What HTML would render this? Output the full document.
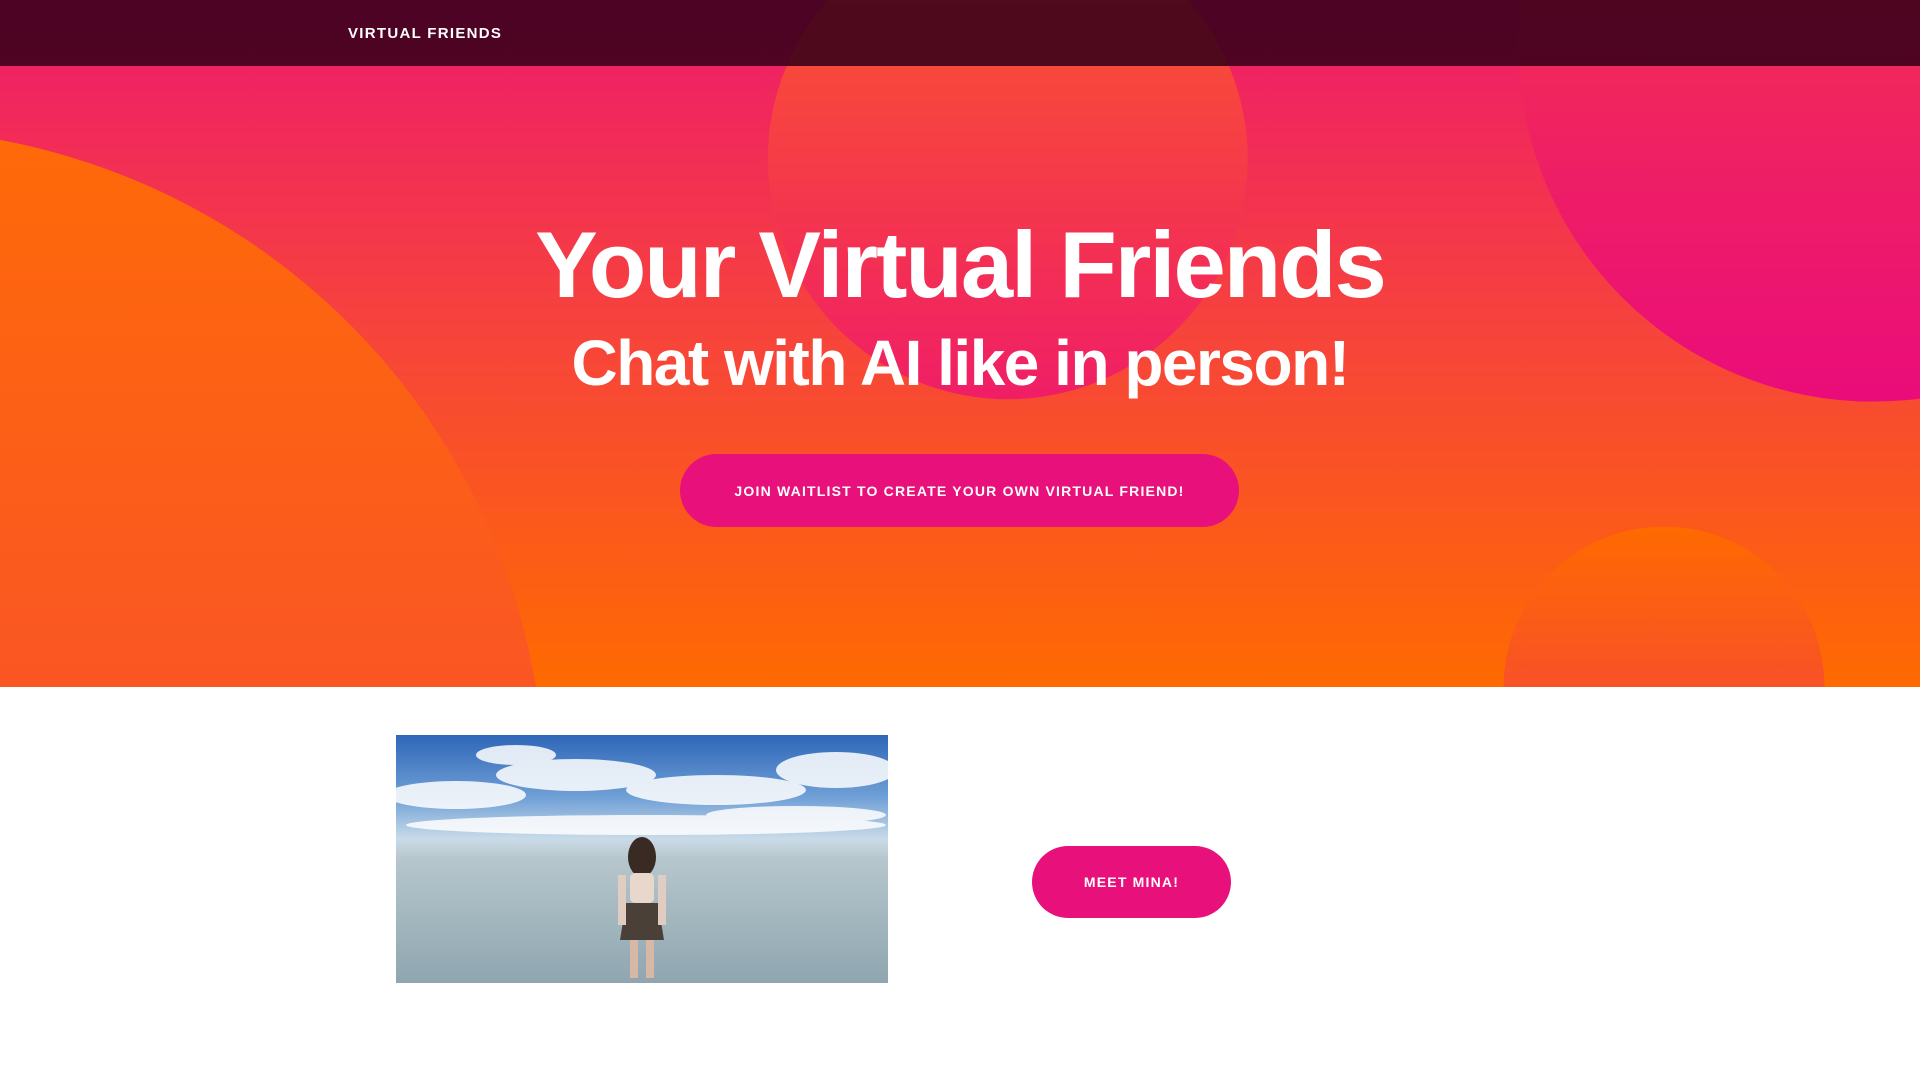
<!DOCTYPE html>
<html><head><meta charset="utf-8"><style>
html,body{margin:0;padding:0;width:1920px;height:1080px;overflow:hidden;background:#fff;font-family:"Liberation Sans",sans-serif}
.hero{position:absolute;left:0;top:0;width:1920px;height:687px;overflow:hidden}
.nav{position:absolute;left:0;top:0;width:1920px;height:66px;background:rgba(55,0,25,0.88)}
.nav span{position:absolute;left:348px;top:25px;color:#fff;font-weight:bold;font-size:15px;letter-spacing:1.3px}
h1{position:absolute;left:0;width:1920px;top:210px;margin:0;text-align:center;color:#fff;font-size:94px;font-weight:bold;letter-spacing:-2px;line-height:110px}
h2{position:absolute;left:0;width:1920px;top:325px;margin:0;text-align:center;color:#fff;font-size:64px;font-weight:bold;letter-spacing:-1.5px;line-height:76px}
.btn{position:absolute;background:#e8107a;color:#fff;font-weight:bold;font-size:14px;letter-spacing:1.2px;border-radius:40px;display:flex;align-items:center;justify-content:center}
.pic{position:absolute;left:396px;top:735px;width:492px;height:248px;overflow:hidden;background:linear-gradient(#2f67b8 0%,#6f9fd6 25%,#c9dbe8 42%,#b6c6cc 50%,#8fa6b0 100%)}
</style></head><body>
<div class="hero">
<svg width="1920" height="687" viewBox="0 0 1568 561" preserveAspectRatio="none" style="position:absolute;left:0;top:0">
<defs>
<linearGradient id="bg" x1="0" y1="0" x2="0" y2="1"><stop offset="0" stop-color="#ee1a6c"/><stop offset="0.5" stop-color="#f7453a"/><stop offset="1" stop-color="#ff6a00"/></linearGradient>
<linearGradient id="c1" x1="0" y1="0" x2="0" y2="1"><stop offset="0" stop-color="#ff6a08"/><stop offset="1" stop-color="#f23a4a"/></linearGradient>
<linearGradient id="c2" x1="0" y1="0" x2="0" y2="1"><stop offset="0" stop-color="#fb5a28"/><stop offset="1" stop-color="#f01e66"/></linearGradient>
<linearGradient id="c3" x1="0" y1="0" x2="0" y2="1"><stop offset="0" stop-color="#f8453a"/><stop offset="1" stop-color="#ea0c7a"/></linearGradient>
<linearGradient id="c4" x1="0" y1="0" x2="0" y2="1"><stop offset="0" stop-color="#ff6a00"/><stop offset="1" stop-color="#f03850"/></linearGradient>
</defs>
<rect width="1568" height="561" fill="url(#bg)"/>
<circle cx="-100" cy="650" r="545" fill="url(#c1)"/>
<circle cx="823" cy="130" r="196" fill="url(#c2)"/>
<circle cx="1530" cy="38" r="290" fill="url(#c3)"/>
<circle cx="1359" cy="561" r="131" fill="url(#c4)"/>
</svg>
<div class="nav"><span>VIRTUAL FRIENDS</span></div>
<h1>Your Virtual Friends</h1>
<h2>Chat with AI like in person!</h2>
<div class="btn" style="left:680px;top:454px;width:559px;height:73px">JOIN WAITLIST TO CREATE YOUR OWN VIRTUAL FRIEND!</div>
</div>
<div class="pic">
<svg width="492" height="248" style="position:absolute;left:0;top:0">
<g fill="#fff" opacity="0.85">
<ellipse cx="60" cy="60" rx="70" ry="14"/><ellipse cx="180" cy="40" rx="80" ry="16"/><ellipse cx="320" cy="55" rx="90" ry="15"/><ellipse cx="440" cy="35" rx="60" ry="18"/><ellipse cx="250" cy="90" rx="240" ry="10"/><ellipse cx="120" cy="20" rx="40" ry="10"/><ellipse cx="400" cy="80" rx="90" ry="9"/>
</g>
<ellipse cx="246" cy="122" rx="14" ry="20" fill="#3a2a24"/>
<rect x="234" y="138" width="24" height="30" rx="5" fill="#e8d8cc"/>
<path d="M230 168 L262 168 L268 205 L224 205 Z" fill="#4a4038"/>
<rect x="234" y="205" width="8" height="38" fill="#d6b8a4"/><rect x="250" y="205" width="8" height="38" fill="#d6b8a4"/>
<rect x="222" y="140" width="8" height="50" fill="#e0ccc0"/><rect x="262" y="140" width="8" height="50" fill="#e0ccc0"/>
</svg>
</div>
<div class="btn" style="left:1032px;top:846px;width:199px;height:72px">MEET MINA!</div>
</body></html>
